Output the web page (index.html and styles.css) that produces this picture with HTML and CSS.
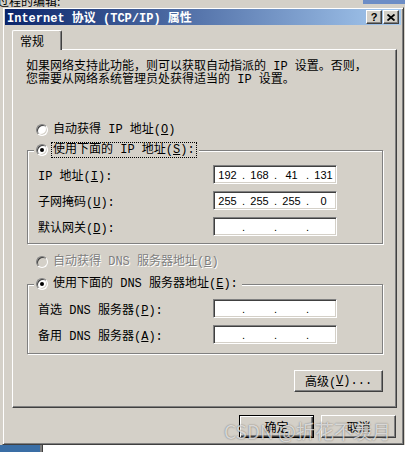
FILE: index.html
```html
<!DOCTYPE html>
<html lang="zh-CN">
<head>
    <meta charset="UTF-8">
    <title>Internet 协议 (TCP/IP) 属性</title>
    <link rel="stylesheet" href="styles.css">
</head>
<body>
    <div class="desktop">
        <div class="behind-top">
            <span class="behind-text">过程的编辑:</span>
            <span class="behind-blue"></span>
        </div>

        <div class="dialog">
            <div class="titlebar">
                <span class="title">Internet 协议 (TCP/IP) 属性</span>
                <div class="title-buttons">
                    <div class="tbtn help">?</div>
                    <div class="tbtn">
                        <svg width="8" height="7" viewBox="0 0 8 7"><path d="M0.5 0.5 L7.5 6.5 M7.5 0.5 L0.5 6.5" stroke="#000" stroke-width="1.8" fill="none"/></svg>
                    </div>
                </div>
            </div>

            <div class="client">
                <div class="tabs">
                    <div class="tab">常规</div>
                </div>
                <div class="panel">
                    <p class="desc">如果网络支持此功能，则可以获取自动指派的 IP 设置。否则，<br>您需要从网络系统管理员处获得适当的 IP 设置。</p>

                    <div class="radio-row first">
                        <span class="radio"></span>
                        <span class="radio-label">自动获得 IP 地址(<u>O</u>)</span>
                    </div>

                    <!-- Static IP group -->
                    <div class="group ip-group">
                        <div class="group-head">
                            <span class="radio checked"></span>
                            <span class="radio-label focus">使用下面的 IP 地址(<u>S</u>):</span>
                        </div>
                        <div class="rows">
                            <div class="field-row">
                                <span class="field-label">IP 地址(<u>I</u>):</span>
                                <div class="ipbox">
                                    <span class="seg">192</span><span class="dot">.</span><span class="seg">168</span><span class="dot">.</span><span class="seg">41</span><span class="dot">.</span><span class="seg">131</span>
                                </div>
                            </div>
                            <div class="field-row">
                                <span class="field-label">子网掩码(<u>U</u>):</span>
                                <div class="ipbox">
                                    <span class="seg">255</span><span class="dot">.</span><span class="seg">255</span><span class="dot">.</span><span class="seg">255</span><span class="dot">.</span><span class="seg">0</span>
                                </div>
                            </div>
                            <div class="field-row">
                                <span class="field-label">默认网关(<u>D</u>):</span>
                                <div class="ipbox">
                                    <span class="seg"></span><span class="dot">.</span><span class="seg"></span><span class="dot">.</span><span class="seg"></span><span class="dot">.</span><span class="seg"></span>
                                </div>
                            </div>
                        </div>
                    </div>

                    <div class="radio-row disabled">
                        <span class="radio"></span>
                        <span class="radio-label">自动获得 DNS 服务器地址(<u>B</u>)</span>
                    </div>

                    <!-- DNS group -->
                    <div class="group dns-group">
                        <div class="group-head">
                            <span class="radio checked"></span>
                            <span class="radio-label">使用下面的 DNS 服务器地址(<u>E</u>):</span>
                        </div>
                        <div class="rows">
                            <div class="field-row">
                                <span class="field-label">首选 DNS 服务器(<u>P</u>):</span>
                                <div class="ipbox">
                                    <span class="seg"></span><span class="dot">.</span><span class="seg"></span><span class="dot">.</span><span class="seg"></span><span class="dot">.</span><span class="seg"></span>
                                </div>
                            </div>
                            <div class="field-row">
                                <span class="field-label">备用 DNS 服务器(<u>A</u>):</span>
                                <div class="ipbox">
                                    <span class="seg"></span><span class="dot">.</span><span class="seg"></span><span class="dot">.</span><span class="seg"></span><span class="dot">.</span><span class="seg"></span>
                                </div>
                            </div>
                        </div>
                    </div>

                    <div class="advanced-row">
                        <div class="btn advanced">高级(<u>V</u>)...</div>
                    </div>
                </div>

                <div class="footer">
                    <div class="btn default">确定</div>
                    <div class="btn">取消</div>
                </div>
            </div>
        </div>

        <div class="behind-bottom">
            <span class="bb-blue"></span>
            <span class="bb-line"></span>
            <span class="bb-white"></span>
        </div>
    </div>

    <div class="watermark">CSDN @折花不羡月</div>
</body>
</html>
```

FILE: styles.css
```css
body {
    margin: 0;
    width: 405px;
    height: 452px;
    overflow: hidden;
    position: relative;
    background-color: #d4d0c8;
    font-family: "Liberation Mono", "Noto Sans CJK SC", monospace;
    font-size: 12px;
    color: #000;
}
.desktop {
    display: flex;
    flex-direction: column;
    height: 452px;
}

/* Windows behind the dialog */
.behind-top {
    height: 7px;
    display: flex;
    justify-content: space-between;
    overflow: hidden;
}
.behind-text {
    font-family: "Noto Sans CJK SC", sans-serif;
    line-height: 12px;
    margin-top: -5px;
    margin-left: -3px;
}
.behind-blue {
    width: 42px;
    height: 4px;
    background-color: #6c8dc6;
}
.behind-bottom {
    flex: 1;
    display: flex;
}
.bb-blue {
    width: 40px;
    background-color: #3a6ea5;
}
.bb-line {
    width: 2px;
    background-color: #808080;
    border-right: 1px solid #404040;
}
.bb-white {
    flex: 1;
    background-color: #fff;
}

/* Dialog frame */
.dialog {
    height: 438px;
    width: 402px;
    margin-left: 2px;
    box-sizing: border-box;
    border: 1px solid;
    border-color: #d4d0c8 #404040 #404040 #d4d0c8;
    box-shadow: inset 1px 1px #fff, inset -1px -1px #808080;
    padding: 1px 2px 2px 2px;
    display: flex;
    flex-direction: column;
}
.titlebar {
    height: 16px;
    background: linear-gradient(to right, #0a246a, #a6caf0);
    display: flex;
    align-items: center;
    justify-content: space-between;
    padding: 0 2px;
}
.title {
    color: #fff;
    font-weight: bold;
    white-space: nowrap;
}
.title-buttons {
    display: flex;
    gap: 1px;
}
.tbtn {
    width: 16px;
    height: 14px;
    box-sizing: border-box;
    background-color: #d4d0c8;
    border: 1px solid;
    border-color: #fff #404040 #404040 #fff;
    box-shadow: inset -1px -1px #808080;
    display: flex;
    align-items: center;
    justify-content: center;
}
.tbtn.help {
    font-family: "Liberation Sans", sans-serif;
    font-weight: bold;
    font-size: 11px;
    line-height: 12px;
}

/* Tabs and page */
.client {
    flex: 1;
    display: flex;
    flex-direction: column;
    padding: 5px 4px 0 7px;
}
.tabs {
    display: flex;
    height: 19px;
}
.tab {
    position: relative;
    z-index: 1;
    width: 50px;
    height: 20px;
    box-sizing: border-box;
    background-color: #d4d0c8;
    border-top: 1px solid #fff;
    border-left: 1px solid #fff;
    border-right: 1px solid #404040;
    box-shadow: inset -1px 0 #808080;
    border-radius: 2px 2px 0 0;
    padding: 2px 0 0 7px;
    font-family: "Noto Sans CJK SC", sans-serif;
    line-height: 16px;
}
.panel {
    height: 359px;
    box-sizing: border-box;
    border: 1px solid;
    border-color: #fff #404040 #404040 #fff;
    box-shadow: inset -1px -1px #808080;
    padding: 0 13px 0 14px;
    display: flex;
    flex-direction: column;
}
.desc {
    margin: 11px 0 0 -1px;
    line-height: 13px;
    white-space: nowrap;
}

/* Radio buttons */
.radio-row {
    display: flex;
    align-items: center;
    height: 16px;
    margin-left: 9px;
}
.radio-row.first {
    margin-top: 35px;
}
.radio-row.disabled {
    margin-top: 10px;
}
.radio {
    width: 12px;
    height: 12px;
    box-sizing: border-box;
    border-radius: 50%;
    background-color: #fff;
    border: 1px solid;
    border-color: #808080 #fff #fff #808080;
    box-shadow: inset 1px 1px #404040, inset -1px -1px #d4d0c8;
    display: flex;
    align-items: center;
    justify-content: center;
    flex-shrink: 0;
}
.radio.checked::after {
    content: "";
    width: 4px;
    height: 4px;
    border-radius: 50%;
    background-color: #000;
}
.radio-label {
    margin-left: 3px;
    padding: 0 1px;
    border: 1px solid transparent;
    line-height: 14px;
    white-space: nowrap;
}
.radio-label.focus {
    border: 1px dotted #000;
}
.disabled .radio {
    background-color: #d4d0c8;
}
.disabled .radio-label {
    color: #808080;
    text-shadow: 1px 1px #fff;
}

/* Group boxes */
.group {
    border: 1px solid #808080;
    box-shadow: inset 1px 1px #fff, 1px 1px #fff;
}
.ip-group {
    margin-top: 12px;
    padding-bottom: 7px;
}
.dns-group {
    margin-top: 14px;
    padding-bottom: 9px;
}
.group-head {
    display: flex;
    align-items: center;
    width: fit-content;
    height: 16px;
    margin: -9px 0 0 6px;
    padding: 0 2px;
    background-color: #d4d0c8;
}
.rows {
    display: flex;
    flex-direction: column;
    gap: 7px;
    padding: 7px 0 0 10px;
}
.field-row {
    display: flex;
    align-items: center;
    height: 19px;
}
.field-label {
    width: 175px;
    white-space: nowrap;
}
.ipbox {
    width: 124px;
    height: 19px;
    box-sizing: border-box;
    background-color: #fff;
    border: 1px solid;
    border-color: #808080 #fff #fff #808080;
    box-shadow: inset 1px 1px #404040, inset -1px -1px #d4d0c8;
    padding: 0 1px;
    display: grid;
    grid-template-columns: 25px 7px 25px 7px 25px 7px 25px;
    align-items: center;
    font-family: "Liberation Sans", sans-serif;
    font-size: 11px;
}
.seg {
    text-align: center;
}
.dot {
    text-align: center;
}

/* Buttons */
.btn {
    height: 23px;
    width: 75px;
    box-sizing: border-box;
    background-color: #d4d0c8;
    border: 1px solid;
    border-color: #fff #404040 #404040 #fff;
    box-shadow: inset -1px -1px #808080;
    display: flex;
    align-items: center;
    justify-content: center;
    white-space: nowrap;
}
.btn.default {
    border-color: #000;
    box-shadow: inset 1px 1px #fff, inset -1px -1px #404040, inset -2px -2px #808080;
}
.advanced-row {
    display: flex;
    justify-content: flex-end;
    margin-top: 16px;
}
.btn.advanced {
    width: 89px;
    height: 22px;
}
.footer {
    display: flex;
    justify-content: flex-end;
    gap: 7px;
    margin-top: 7px;
    padding-right: 1px;
}

/* Screenshot watermark */
.watermark {
    position: absolute;
    right: 14px;
    bottom: 10px;
    font-family: "Noto Sans CJK SC", sans-serif;
    font-size: 19px;
    line-height: 22px;
    color: rgba(255, 255, 255, 0.7);
    text-shadow: 0 0 1.5px rgba(0, 0, 0, 0.55);
    white-space: nowrap;
}
```
